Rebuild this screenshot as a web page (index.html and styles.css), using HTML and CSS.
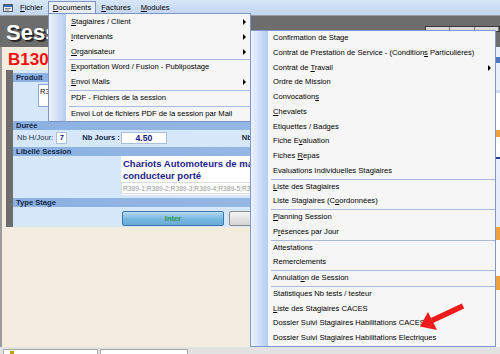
FILE: index.html
```html
<!DOCTYPE html>
<html lang="fr">
<head>
<meta charset="utf-8">
<title>Session</title>
<link rel="stylesheet" href="styles.css">
</head>
<body>
<div class="screen">
  <div class="menubar">
    <span class="appicon">
      <svg width="10" height="8" viewBox="0 0 10 8"><rect x="0.5" y="0.5" width="9" height="7" fill="#eef2f8" stroke="#5a5a5a"/><rect x="1" y="1" width="8" height="2" fill="#3b67b3"/><path d="M2 4.5h6M2 6h4" stroke="#6b6b6b" stroke-width="0.8"/></svg>
    </span>
    <span class="mb-item"><u>F</u>ichier</span>
    <span class="mb-item open"><u>D</u>ocuments</span>
    <span class="mb-item"><u>F</u>actures</span>
    <span class="mb-item"><u>M</u>odules</span>
  </div>

  <div class="titleband">
    <span class="title">Sessions</span>
    <div class="tb-ctrl"><span></span><span></span><span></span></div>
  </div>

  <div class="window">
    <div class="main">
      <div class="code">B13025</div>
      <div class="panel">
        <div class="pstrip"></div>
        <div class="pbody">
          <div class="bar">Produit</div>
          <div class="prodbox">R389 - Chariots</div>
          <div class="bar bar-gap">Durée</div>
          <div class="row">
            <span class="lbl">Nb H/Jour:</span>
            <span class="inp small">7</span>
            <span class="lbl bold gap1">Nb Jours :</span>
            <span class="inp wide">4.50</span>
            <span class="lbl bold gap2">Nb Heures</span>
          </div>
          <div class="bar bar-gap2">Libellé Session</div>
          <div class="libelle">
            <div class="lib-title">Chariots Automoteurs de manutention à<br>conducteur porté</div>
            <div class="lib-codes">R389-1;R389-2;R389-3;R389-4;R389-5;R389-6</div>
          </div>
          <div class="bar bar-gap3">Type Stage</div>
          <div class="buttons">
            <span class="btn inter">Inter</span>
            <span class="btn intra">Intra</span>
          </div>
        </div>
      </div>
    </div>
    <div class="sidelist">
      <div class="sl a"></div>
      <div class="sl b"></div>
      <div class="sl c"></div>
      <div class="sl o1"></div>
      <div class="sl d"></div>
      <div class="sl e"></div>
      <div class="sl o2"></div>
      <div class="sl f"></div>
      <div class="sl o3"></div>
      <div class="sl g"></div>
    </div>
  </div>

  <div class="status">
    <span class="sbox one"><i class="sicon"></i></span>
    <span class="sbox two"></span>
  </div>

  <div class="menu m1">
    <div class="mi sub"><span><u>S</u>tagiaires / Client</span></div>
    <div class="mi sub"><span><u>I</u>ntervenants</span></div>
    <div class="mi sub"><span><u>O</u>rganisateur</span></div>
    <div class="mi grp"><span><u>E</u>xportation Word / Fusion - Publipostage</span></div>
    <div class="mi sub"><span><u>E</u>nvoi Mails</span></div>
    <div class="mi grp"><span>PDF - Fichiers de la session</span></div>
    <div class="mi grp"><span>Envoi Lot de fichiers PDF de la session par Mail</span></div>
  </div>

  <div class="menu m2">
    <div class="mi"><span>Confirmation de Stage</span></div>
    <div class="mi"><span>Contrat de Prestation de Service - (Condition<u>s</u> Particulières)</span></div>
    <div class="mi sub"><span>Contrat de <u>T</u>ravail</span></div>
    <div class="mi"><span>Ordre de Mission</span></div>
    <div class="mi"><span>Convocation<u>s</u></span></div>
    <div class="mi"><span><u>C</u>hevalets</span></div>
    <div class="mi"><span>Etiquettes / Badges</span></div>
    <div class="mi"><span>Fiche E<u>v</u>aluation</span></div>
    <div class="mi"><span>Fiches <u>R</u>epas</span></div>
    <div class="mi"><span>Evaluations Individuelles Stagiaires</span></div>
    <div class="mi grp"><span><u>L</u>iste des Stagiaires</span></div>
    <div class="mi"><span>Liste Stagiaires (C<u>o</u>ordonnées)</span></div>
    <div class="mi grp"><span><u>P</u>lanning Session</span></div>
    <div class="mi"><span>P<u>r</u>ésences par Jour</span></div>
    <div class="mi grp"><span>Attestations</span></div>
    <div class="mi"><span>Remerciements</span></div>
    <div class="mi grp"><span>Annulati<u>o</u>n de Session</span></div>
    <div class="mi grp"><span>Statistiques Nb tests / testeur</span></div>
    <div class="mi"><span><u>L</u>iste des Stagiaires CACES</span></div>
    <div class="mi"><span>Dossier Suivi Stagiaires Habilitations CACES</span></div>
    <div class="mi"><span>Dossier Suivi Stagiaires Habilitations Electriques</span></div>
  </div>

  <svg class="redarrow" width="500" height="354" viewBox="0 0 500 354">
    <line x1="463" y1="306" x2="432" y2="320.5" stroke="#ee1b1b" stroke-width="5.5"/>
    <polygon points="420,326.5 428,312 437,330" fill="#ee1b1b"/>
  </svg>
</div>
</body>
</html>
```

FILE: styles.css
```css
* { box-sizing: border-box; }

html, body {
  margin: 0;
  padding: 0;
}

body {
  width: 500px;
  height: 354px;
  overflow: hidden;
  font-family: "Liberation Sans", Arial, sans-serif;
  font-size: 7.6px;
  color: #000;
}

.screen {
  position: relative;
  width: 500px;
  height: 354px;
  overflow: hidden;
}

/* ---------- top menu bar ---------- */
.menubar {
  height: 15px;
  display: flex;
  align-items: center;
  padding-left: 3px;
  background: linear-gradient(#d7e6f9, #c1d5f1);
}

.appicon {
  width: 10px;
  height: 8px;
  margin-right: 2px;
  display: flex;
}

.mb-item {
  padding: 0 5px;
  height: 13px;
  line-height: 13px;
  white-space: nowrap;
}

.mb-item.open {
  align-self: flex-end;
  height: 14px;
  line-height: 12px;
  padding: 0 4px;
  border: 1px solid #7c93c4;
  border-bottom: none;
  background: #e9eef7;
}

/* ---------- title band ---------- */
.titleband {
  height: 32px;
  background: #6d6d6d;
  border-top: 1px solid #9a9a9a;
  display: flex;
  justify-content: space-between;
  align-items: flex-start;
}

.title {
  margin-top: 4px;
  padding-left: 6px;
  font-size: 22px;
  font-weight: bold;
  color: #fff;
  line-height: 25px;
  text-shadow: 1px 1px 0 #222, 2px 2px 0 #333;
  white-space: nowrap;
}

.tb-ctrl {
  margin-top: 10px;
  width: 75px;
  height: 6px;
  background: #d9d9d9;
  border: 1px solid #3a3a3a;
  display: flex;
}

.tb-ctrl span {
  flex: 1;
  border-right: 1px solid #777;
}

/* ---------- window ---------- */
.window {
  height: 300px;
  display: flex;
  background: #f4ecdf;
  border-left: 2px solid #9b9b9b;
}

.main {
  flex: 1;
  min-width: 0;
}

.code {
  height: 23px;
  padding: 3px 0 0 6px;
  font-size: 17px;
  font-weight: bold;
  line-height: 20px;
  color: #f01010;
  white-space: nowrap;
}

.panel {
  margin-left: 4px;
  height: 157px;
  display: flex;
  background: #d6e7f9;
}

.pstrip {
  width: 7px;
  background: #6d6d6d;
}

.pbody {
  flex: 1;
  padding-top: 3px;
}

.bar {
  height: 9px;
  line-height: 9px;
  padding-left: 3px;
  background: linear-gradient(to right, #8cb1e1, #9dbde7);
  font-weight: bold;
  color: #14284a;
  white-space: nowrap;
}

.bar-gap { margin-top: 14px; }
.bar-gap2 { margin-top: 2px; }
.bar-gap3 { margin-top: 3px; }

.prodbox {
  margin: 2px 0 0 25px;
  width: 300px;
  height: 23px;
  background: #fff;
  border: 1px solid #8aa6cb;
  padding: 2px 1px;
  line-height: 9px;
  color: #111;
}

.row {
  height: 15px;
  display: flex;
  align-items: center;
  padding-left: 4px;
  color: #22344f;
  white-space: nowrap;
}

.lbl.bold { font-weight: bold; color: #14284a; }
.gap1 { margin-left: 15px; }
.gap2 { margin-left: 75px; }

.inp {
  height: 12px;
  background: #fff;
  border: 1px solid #a9bfdc;
  font-weight: bold;
  color: #1a1a80;
  display: flex;
  align-items: center;
  justify-content: center;
}

.inp.small { width: 11px; margin-left: 3px; }
.inp.wide { width: 46px; margin-left: 1px; font-size: 8.7px; }

.libelle {
  margin-left: 108px;
  width: 300px;
  height: 39px;
  background: #fff;
}

.lib-title {
  height: 26px;
  padding: 2px 0 0 2px;
  font-size: 9.5px;
  line-height: 12px;
  font-weight: bold;
  color: #1d1d8a;
  white-space: nowrap;
}

.lib-codes {
  height: 12px;
  line-height: 11px;
  padding-left: 1px;
  font-size: 6.7px;
  color: #9a9a9a;
  border: 1px solid #dcdcdc;
  white-space: nowrap;
}

.buttons {
  margin-top: 4px;
  margin-left: 109px;
  display: flex;
  gap: 5px;
}

.btn {
  height: 15px;
  width: 102px;
  border-radius: 2px;
  display: flex;
  align-items: center;
  justify-content: center;
  font-weight: bold;
}

.btn.inter {
  background: linear-gradient(#b6dbf4, #78b6e0 55%, #6aaad8);
  border: 1px solid #3b78ad;
  color: #2c9a3f;
}

.btn.intra {
  background: linear-gradient(#f4f4f4, #d6d6d6);
  border: 1px solid #8d8d8d;
  color: #555;
}

/* right edge list, mostly hidden */
.sidelist {
  width: 6px;
  display: flex;
  flex-direction: column;
  background: #f3f6fb;
  border-left: 1px solid #5d7fc0;
}

.sl.a { height: 10px; background: #eaf1fb; }
.sl.b { height: 6px; background: #4e78be; }
.sl.c { height: 67px; background: linear-gradient(#eaf1fb 0 40%, #c9d9f0 40% 45%, #fff 45%); }
.sl.o1 { height: 7px; background: #f0a23a; }
.sl.d { height: 40px; background: linear-gradient(#fff 0 50%, #2a3c8c 50% 56%, #e8f0fb 56%); }
.sl.e { height: 50px; background: #e6eefa; }
.sl.o2 { height: 13px; background: #f0a23a; }
.sl.f { height: 36px; background: #fbfbfb; }
.sl.o3 { height: 14px; background: #f0a23a; }
.sl.g { flex: 1; background: #f6f6f6; }

/* status bar */
.status {
  height: 7px;
  background: #e2e2e2;
  display: flex;
  padding: 2px 0 0 3px;
  gap: 2px;
}

.sbox {
  height: 8px;
  background: #fff;
  border: 1px solid #a8a8a8;
}

.sbox.one { width: 95px; padding-left: 6px; }
.sbox.two { width: 88px; }

.sicon {
  display: block;
  width: 4px;
  height: 4px;
  margin-top: 1px;
  background: #b8a21a;
}

/* ---------- dropdown menus ---------- */
.menu {
  position: absolute;
  border: 1px solid #7d95c5;
  background: linear-gradient(to right, #edf3fd 0, #b4ccf1 17px, #f6f6f6 17px);
  z-index: 5;
}

.m1 {
  left: 48px;
  top: 13px;
  width: 203px;
  padding-top: 1px;
}

.m2 {
  left: 250px;
  top: 30px;
  width: 246px;
  border-color: #7f98cc;
}

.mi {
  height: 14.75px;
  line-height: 14.75px;
  padding: 0 4px 0 22px;
  display: flex;
  align-items: center;
  justify-content: space-between;
  white-space: nowrap;
}

.mi.grp {
  height: 15.75px;
  border-top: 1px solid transparent;
  background: linear-gradient(#a9badc, #a9badc) no-repeat right top;
  background-size: calc(100% - 20px) 1px;
  background-origin: border-box;
}

.mi.sub::after {
  content: "";
  width: 0;
  height: 0;
  border-left: 3px solid #000;
  border-top: 3px solid transparent;
  border-bottom: 3px solid transparent;
}

u { text-decoration-thickness: 1px; text-underline-offset: 1px; }

.redarrow {
  position: absolute;
  left: 0;
  top: 0;
  z-index: 10;
  pointer-events: none;
}
```
